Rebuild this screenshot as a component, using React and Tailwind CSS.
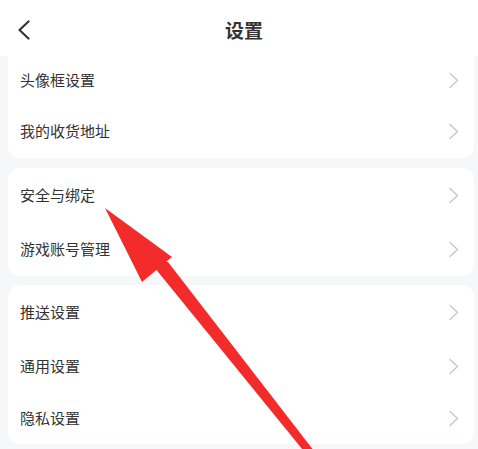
import React from "react";

const Chevron = () => (
  <svg width="12" height="17" viewBox="0 0 12 17" className="shrink-0">
    <polyline points="2,1.5 9.5,8.5 2,15.5" fill="none" stroke="#c9c9cc" strokeWidth="1.5" strokeLinecap="round" strokeLinejoin="round" />
  </svg>
);

const Row = ({ label, h }) => (
  <div className={`flex items-center justify-between pl-[12px] pr-[14px] ${h}`}>
    <span className="text-[15px] text-[#333333]">{label}</span>
    <Chevron />
  </div>
);

export default function App() {
  return (
    <div
      className="relative w-[478px] h-[449px] overflow-hidden bg-[#f6f7f9]"
      style={{ fontFamily: '"Noto Sans CJK SC", "Noto Sans", sans-serif' }}
    >
      <div className="relative h-[56px] bg-white flex items-center justify-center pl-[10px]">
        <svg width="14" height="20" viewBox="0 0 14 20" className="absolute left-[17px] top-[20px]">
          <polyline points="11.5,1.5 2.5,10 11.5,18.5" fill="none" stroke="#333333" strokeWidth="2.2" strokeLinecap="round" strokeLinejoin="round" />
        </svg>
        <span className="text-[19px] font-bold text-[#333333] mt-[5px]">设置</span>
      </div>
      <div className="pl-[8px] pr-[4px] flex flex-col">
        <div className="bg-white rounded-b-xl">
          <Row label="头像框设置" h="h-[49px]" />
          <Row label="我的收货地址" h="h-[53px]" />
        </div>
        <div className="bg-white rounded-xl mt-[10px]">
          <Row label="安全与绑定" h="h-[55px]" />
          <Row label="游戏账号管理" h="h-[53px]" />
        </div>
        <div className="bg-white rounded-xl mt-[9px]">
          <Row label="推送设置" h="h-[54px]" />
          <Row label="通用设置" h="h-[54px]" />
          <Row label="隐私设置" h="h-[51px]" />
        </div>
      </div>
      <svg
        className="absolute left-0 top-0 pointer-events-none"
        width="478"
        height="449"
        viewBox="0 0 478 449"
      >
        <polygon points="150,262 168,262 321,460 311,460" fill="#f42b2b" />
        <polygon points="105,208 172,257 142,282" fill="#f42b2b" />
      </svg>
    </div>
  );
}
